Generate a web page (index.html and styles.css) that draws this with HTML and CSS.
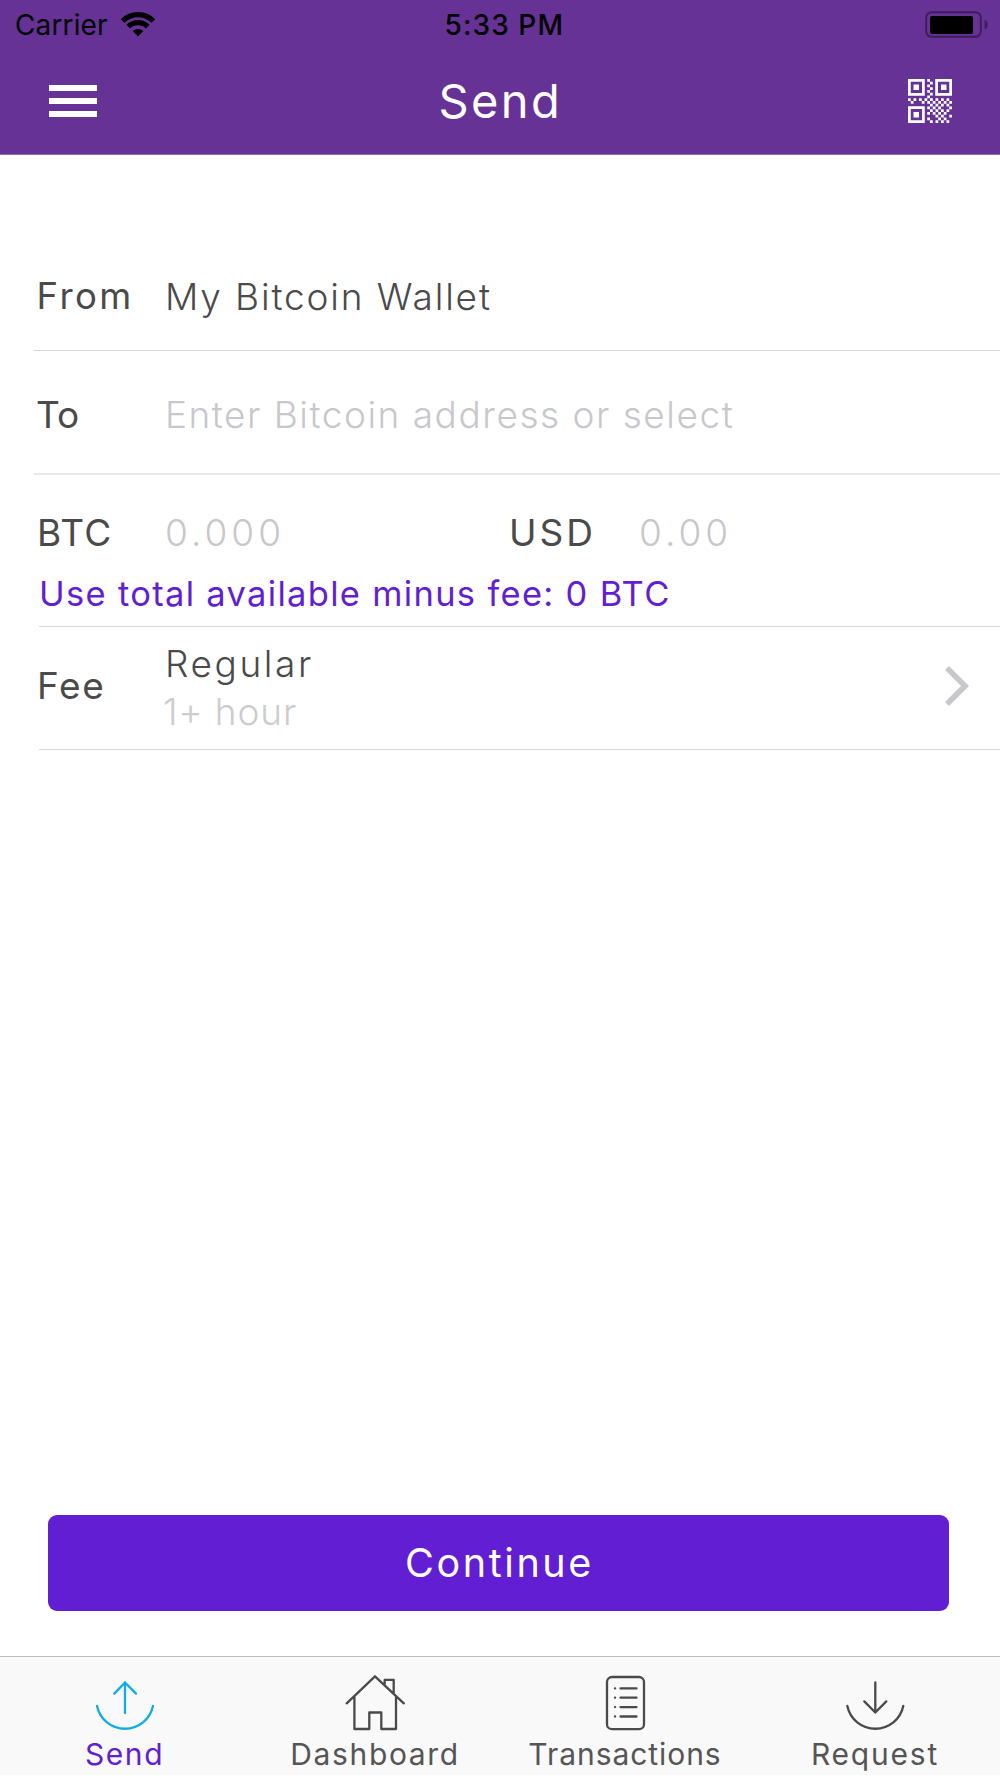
FILE: index.html
```html
<!DOCTYPE html>
<html lang="en">
<head>
<meta charset="utf-8">
<title>Send</title>
<link rel="stylesheet" href="styles.css">
</head>
<body>
<div class="screen">
  <header class="header">
    <div class="status">
      <div class="status-left">
        <span class="carrier">Carrier</span>
        <svg class="wifi" width="36" height="26" viewBox="0 0 36 26">
          <g fill="none" stroke="#000" stroke-width="5.2">
            <path d="M2.6 10A21.8 21.8 0 0 1 33.4 10"/>
            <path d="M8.2 15.6A13.9 13.9 0 0 1 27.8 15.6"/>
          </g>
          <path d="M18 25.4L12.7 20.1A7.5 7.5 0 0 1 23.3 20.1Z"/>
        </svg>
      </div>
      <span class="clock">5:33 PM</span>
      <svg class="battery" width="64" height="28" viewBox="0 0 64 28">
        <rect x="2.2" y="2.2" width="54.6" height="24.6" rx="5.5" fill="none" stroke="#3d1e5a" stroke-width="2"/>
        <rect x="6" y="6" width="43" height="18" rx="2"/>
        <path d="M60.6 9.5Q63.6 11 63.6 14.5T60.6 19.5Z" fill="#3d1e5a"/>
      </svg>
    </div>
    <nav class="nav">
      <div class="menu"><i></i><i></i><i></i></div>
      <h1 class="title">Send</h1>
      <svg class="qr" width="44" height="44" viewBox="0 0 16 16" fill="#fff">
        <g fill="none" stroke="#fff">
          <rect x=".5" y=".5" width="5.1" height="5.1"/>
          <rect x="10.4" y=".5" width="5.1" height="5.1"/>
          <rect x=".5" y="10.4" width="5.1" height="5.1"/>
        </g>
        <path d="M2 2h2v2h-2zM12 2h2v2h-2zM2 12h2v2h-2z"/>
        <path d="M7 0h1v1h-1zM8 1h1v1h-1zM7 2h1v1h-1zM8 3h1v1h-1zM7 4h1v1h-1zM8 5h1v1h-1zM7 6h1v1h-1zM0 7h1v1h-1zM2 7h1v1h-1zM4 7h1v1h-1zM6 7h1v1h-1zM1 8h1v1h-1zM5 8h1v1h-1z"/>
        <path d="M8 7h1v1h-1zM10 7h1v1h-1zM12 7h1v1h-1zM14 7h1v1h-1zM7 8h1v1h-1zM9 8h1v1h-1zM11 8h1v1h-1zM13 8h1v1h-1zM15 8h1v1h-1zM8 9h1v1h-1zM10 9h1v1h-1zM12 9h1v1h-1zM14 9h1v1h-1zM7 10h1v1h-1zM9 10h1v1h-1zM11 10h1v1h-1zM15 10h1v1h-1zM8 11h1v1h-1zM10 11h1v1h-1zM12 11h1v1h-1zM14 11h1v1h-1zM7 12h1v1h-1zM9 12h1v1h-1zM11 12h1v1h-1zM13 12h1v1h-1zM10 13h1v1h-1zM12 13h1v1h-1zM15 13h1v1h-1zM7 14h1v1h-1zM11 14h1v1h-1zM13 14h1v1h-1zM8 15h1v1h-1zM10 15h1v1h-1zM12 15h1v1h-1zM14 15h1v1h-1z"/>
      </svg>
    </nav>
  </header>

  <main class="form">
    <div class="row row-from">
      <span class="label label-from">From</span>
      <span class="value value-wallet">My Bitcoin Wallet</span>
    </div>
    <hr class="line">
    <div class="row row-to">
      <span class="label label-to">To</span>
      <span class="value placeholder">Enter Bitcoin address or select</span>
    </div>
    <hr class="line line-soft">
    <div class="row row-amount">
      <span class="label label-btc">BTC</span>
      <span class="value placeholder digits">0.000</span>
      <span class="label label-usd">USD</span>
      <span class="value placeholder digits">0.00</span>
    </div>
    <a class="use-total">Use total available minus fee: 0 BTC</a>
    <hr class="line line-inset">
    <div class="row row-fee">
      <span class="label label-fee">Fee</span>
      <div class="fee">
        <span class="value value-speed">Regular</span>
        <span class="value value-time">1+ hour</span>
      </div>
      <svg class="chevron" width="26" height="42" viewBox="0 0 26 42">
        <path d="M2 3L20 21L2 39" fill="none" stroke="#c7c7cc" stroke-width="5.6"/>
      </svg>
    </div>
    <hr class="line line-inset">
  </main>

  <button class="continue">Continue</button>

  <footer class="tabs">
    <div class="tab tab-active">
      <svg class="icon" width="60" height="64" viewBox="0 0 60 64">
        <path d="M30 43V12.5M19.3 23.6L30 12.5L41 23.6"/>
        <path d="M2 36A28.6 28.6 0 0 0 58 36"/>
      </svg>
      <span class="tab-send">Send</span>
    </div>
    <div class="tab">
      <svg class="icon" width="60" height="64" viewBox="0 0 60 64">
        <path d="M1.7 33.3L30 6.3L58.8 33.3M9.4 27V59H24.3V42.5H36.3V59H51V27M39.7 14V9.8H48.7V23"/>
      </svg>
      <span class="tab-dashboard">Dashboard</span>
    </div>
    <div class="tab">
      <svg class="icon" width="60" height="64" viewBox="0 0 60 64">
        <rect x="12" y="7" width="37" height="52.2" rx="5"/>
        <path d="M25.5 18.4H41.5M25.5 27.7H41.5M25.5 37.1H41.5M25.5 46.5H41.5M20 18.4h.1M20 27.7h.1M20 37.1h.1M20 46.5h.1"/>
      </svg>
      <span class="tab-transactions">Transactions</span>
    </div>
    <div class="tab">
      <svg class="icon" width="60" height="64" viewBox="0 0 60 64">
        <path d="M30.3 12.5V42.5M19.3 31.4L30.3 42.5L41.3 31.4"/>
        <path d="M2.3 36A28.6 28.6 0 0 0 58.3 36"/>
      </svg>
      <span class="tab-request">Request</span>
    </div>
  </footer>
</div>
</body>
</html>
```
FILE: styles.css
```css
* { box-sizing: border-box; }

body {
  margin: 0;
  background: #fff;
  color: #4a4a4a;
  font-family: Inter, "Liberation Sans", sans-serif;
}

.screen {
  display: flex;
  flex-direction: column;
  width: 1000px;
  height: 1778px;
  overflow: hidden;
}

/* Header */
.header {
  flex: none;
  height: 155px;
  background: #663296;
  border-bottom: 1px solid #946fb6;
}

.status {
  display: grid;
  grid-template-columns: 1fr 120px 1fr;
  height: 50px;
  padding: 0 12px 0 15px;
  color: #000;
  font-size: 28px;
  line-height: 51px;
}

.status-left { display: flex; }
.carrier { width: 105px; letter-spacing: .13px; }
.wifi { margin-top: 11px; }
.clock { margin-left: 3px; font-weight: 500; letter-spacing: 1.1px; white-space: nowrap; }
.battery { justify-self: end; margin-top: 10px; }

.nav {
  display: grid;
  grid-template-columns: 1fr 126px 1fr;
  align-items: center;
  height: 104px;
  padding: 0 48px 0 49px;
}

.menu { display: grid; gap: 7px; width: 47.5px; margin-top: -2px; }
.menu i { height: 6px; background: #fff; }
.title { margin: -3px 0 0 1px; color: #fff; font-size: 47px; font-weight: 400; letter-spacing: 2.4px; line-height: 104px; }
.qr { justify-self: end; margin-top: -3px; }

/* Form */
.form { flex: 1; padding-top: 87px; }

.row {
  display: grid;
  grid-template-columns: 127px 1fr;
  align-items: center;
  padding-left: 38px;
}

.row-from { height: 108px; }
.row-to { height: 122px; padding-top: 5px; }
.row-amount { grid-template-columns: 127px 345px 129px 1fr; height: 85px; margin-top: 15px; }
.row-fee { grid-template-columns: 127px 1fr 26px; height: 122px; padding-right: 29px; }

.label { margin-left: -1px; font-size: 37px; font-weight: 400; }
.label-from { margin-left: -1.5px; font-size: 36.5px; letter-spacing: 2.4px; }
.label-to { margin-left: -2px; letter-spacing: 0; }
.label-btc { letter-spacing: 1.2px; }
.label-usd { letter-spacing: 3px; }
.label-fee { margin-top: -5px; letter-spacing: 1.6px; }

.value { font-size: 37px; font-weight: 300; letter-spacing: 1.52px; white-space: nowrap; }
.value-wallet { letter-spacing: 1.86px; }
.placeholder { color: #c7c7cc; }
.digits { font-weight: 300; letter-spacing: 4px; }

.fee { display: grid; margin-top: -1px; line-height: 48px; }
.value-speed { letter-spacing: 2.59px; }
.value-time { margin-left: -2px; color: #ccc; font-weight: 300; letter-spacing: .9px; }
.chevron { margin-top: -4px; }

.use-total {
  display: block;
  height: 51px;
  padding-left: 39px;
  color: #621ed2;
  font-size: 34.5px;
  font-weight: 400;
  letter-spacing: 1.31px;
  line-height: 37px;
}

.line { height: 1px; margin: 0 0 0 34px; border: 0; background: #d9d9db; }
.line-soft { height: 2px; background: #e9e9ea; }
.line-inset { margin-left: 39px; }

/* Primary action */
.continue {
  flex: none;
  width: 901px;
  height: 96px;
  margin: 0 0 45px 48px;
  padding: 0 0 0 2px;
  border: 0;
  border-radius: 9px;
  background: #621ed2;
  color: #fff;
  font: 400 39.5px/96px Inter, "Liberation Sans", sans-serif;
  letter-spacing: 2.6px;
}

/* Tab bar */
.tabs {
  flex: none;
  display: grid;
  grid-template-columns: repeat(4, 1fr);
  height: 119px;
  margin-bottom: 3px;
  border-top: 1px solid #bdbdbf;
  background: #f9f9f9;
}

.tab {
  display: flex;
  flex-direction: column;
  align-items: center;
  padding-top: 13px;
  color: #555;
  font-size: 30px;
  line-height: 40px;
}

.tab-active { color: #621ed2; }
.icon { fill: none; stroke: #4a4a4a; stroke-width: 2.3; stroke-linecap: round; stroke-linejoin: round; }
.tab-active .icon { stroke: #10ade4; }
.tab-send { margin-right: 1px; letter-spacing: 1.6px; }
.tab-dashboard { letter-spacing: 1.64px; }
.tab-transactions { letter-spacing: .94px; }
.tab-request { letter-spacing: 1.78px; }
```
